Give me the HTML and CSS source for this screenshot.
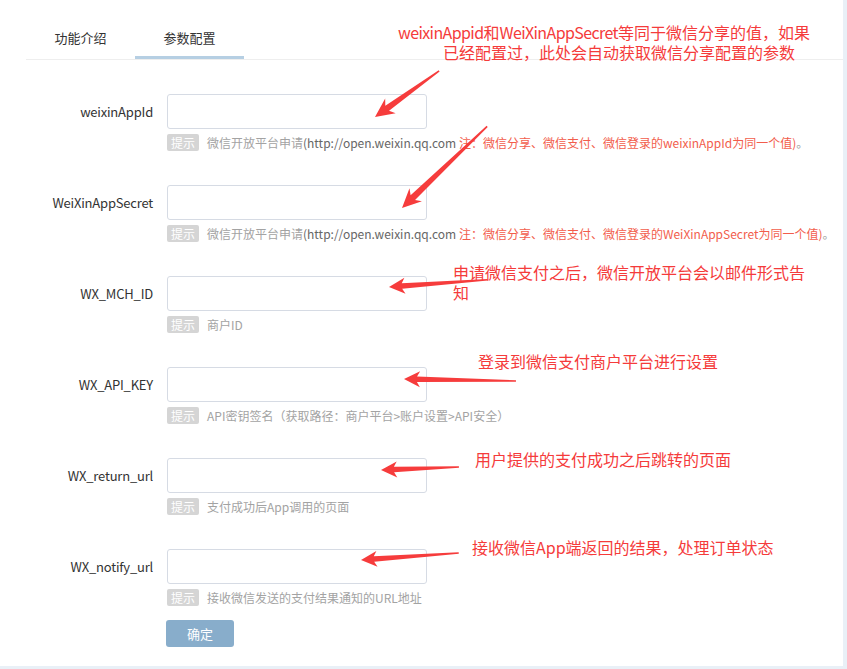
FILE: index.html
```html
<!DOCTYPE html>
<html lang="zh-CN">
<head>
<meta charset="utf-8">
<title>参数配置</title>
<link rel="stylesheet" href="styles.css">
</head>
<body>
<div class="page">
  <div class="tabs">
    <div class="tab">功能介绍</div>
    <div class="tab active">参数配置</div>
  </div>
  <form class="form">
    <div class="row">
      <label class="label">weixinAppId</label>
      <div class="field">
        <input class="input" type="text">
        <div class="hint"><span class="badge">提示</span><span class="hint-text">微信开放平台申请<span class="link">(http://open.weixin.qq.com</span> <span class="warn">注：微信分享、微信支付、微信登录的weixinAppId为同一个值)</span>。</span></div>
      </div>
    </div>
    <div class="row">
      <label class="label">WeiXinAppSecret</label>
      <div class="field">
        <input class="input" type="text">
        <div class="hint"><span class="badge">提示</span><span class="hint-text">微信开放平台申请<span class="link">(http://open.weixin.qq.com</span> <span class="warn">注：微信分享、微信支付、微信登录的WeiXinAppSecret为同一个值)</span>。</span></div>
      </div>
    </div>
    <div class="row">
      <label class="label">WX_MCH_ID</label>
      <div class="field">
        <input class="input" type="text">
        <div class="hint"><span class="badge">提示</span><span class="hint-text">商户ID</span></div>
      </div>
    </div>
    <div class="row">
      <label class="label">WX_API_KEY</label>
      <div class="field">
        <input class="input" type="text">
        <div class="hint"><span class="badge">提示</span><span class="hint-text">API密钥签名（获取路径：商户平台&gt;账户设置&gt;API安全）</span></div>
      </div>
    </div>
    <div class="row">
      <label class="label">WX_return_url</label>
      <div class="field">
        <input class="input" type="text">
        <div class="hint"><span class="badge">提示</span><span class="hint-text">支付成功后App调用的页面</span></div>
      </div>
    </div>
    <div class="row">
      <label class="label">WX_notify_url</label>
      <div class="field">
        <input class="input" type="text">
        <div class="hint"><span class="badge">提示</span><span class="hint-text">接收微信发送的支付结果通知的URL地址</span></div>
      </div>
    </div>
    <div class="actions"><button class="btn" type="button">确定</button></div>
  </form>

  <div class="note note-1a"><span class="tight">weixinAppid</span>和<span class="tight">WeiXinAppSecret</span>等同于微信分享的值，如果</div>
  <div class="note note-1b">已经配置过，此处会自动获取微信分享配置的参数</div>
  <div class="note note-3a">申请微信支付之后，微信开放平台会以邮件形式告</div>
  <div class="note note-3b">知</div>
  <div class="note note-4">登录到微信支付商户平台进行设置</div>
  <div class="note note-5">用户提供的支付成功之后跳转的页面</div>
  <div class="note note-6">接收微信App端返回的结果，处理订单状态</div>

  <svg class="arrows" width="843" height="666" viewBox="0 0 843 666">
    <g fill="#f63c3c">
      <g transform="translate(375 117) rotate(144.3)"><polygon points="-79,-0.8 -15,-3.2 -19,-9 0,0 -19,9 -15,3.2 -79,0.8"/></g>
      <g transform="translate(402 208) rotate(136.2)"><polygon points="-118,-0.8 -15,-3.2 -19,-9 0,0 -19,9 -15,3.2 -118,0.8"/></g>
      <g transform="translate(389 287) rotate(175.8)"><polygon points="-99,-0.7 -13,-2.8 -16,-8 0,0 -16,8 -13,2.8 -99,0.7"/></g>
      <g transform="translate(404 379) rotate(181)"><polygon points="-112,-0.7 -13,-2.8 -16,-8 0,0 -16,8 -13,2.8 -112,0.7"/></g>
      <g transform="translate(381 470) rotate(177.8)"><polygon points="-78,-0.7 -13,-2.8 -16,-8 0,0 -16,8 -13,2.8 -78,0.7"/></g>
      <g transform="translate(361 560) rotate(175.9)"><polygon points="-98,-0.7 -13,-2.8 -16,-8 0,0 -16,8 -13,2.8 -98,0.7"/></g>
    </g>
  </svg>
</div>
</body>
</html>
```
FILE: styles.css
```css
* { box-sizing: border-box; }

html, body {
  margin: 0;
  padding: 0;
  background: #e9f0f7;
  font-family: "Noto Sans CJK SC", "Noto Sans", sans-serif;
  color: #333;
}

.page {
  position: relative;
  width: 843px;
  height: 666px;
  background: #fff;
  overflow: hidden;
}

.tabs {
  display: flex;
  margin-left: 26px;
  padding-top: 20px;
  border-bottom: 1px solid #eeeeee;
}

.tab {
  width: 109px;
  height: 39px;
  line-height: 36px;
  font-size: 13px;
  text-align: center;
  color: #333;
  border-bottom: 3px solid transparent;
}

.tab.active {
  border-bottom-color: #b6cfe3;
}

.form {
  margin: 0;
  padding-top: 34px;
  display: flex;
  flex-direction: column;
  gap: 34px;
}

.row {
  display: grid;
  grid-template-columns: 153px 1fr;
  column-gap: 14px;
}

.label {
  height: 35px;
  line-height: 35px;
  font-size: 13px;
  text-align: right;
  color: #333;
  letter-spacing: -0.2px;
}

.field {
  display: flex;
  flex-direction: column;
  gap: 5px;
}

.input {
  width: 260px;
  height: 35px;
  border: 1px solid #d6dbe4;
  border-radius: 3px;
  background: #fff;
  margin: 0;
  outline: none;
}

.hint {
  display: flex;
  align-items: center;
  gap: 8px;
  height: 17px;
  font-size: 12px;
  white-space: nowrap;
}

.badge {
  display: inline-block;
  width: 32px;
  height: 17px;
  line-height: 17px;
  text-align: center;
  background: #d5d5d5;
  color: #fff;
  border-radius: 2px;
  font-size: 12px;
}

.hint-text {
  color: #a3a3a3;
  line-height: 17px;
}

.hint-text .link { color: #666; }
.hint-text .warn { color: #f25d4c; }

.actions {
  margin-top: -20px;
  padding-left: 166px;
}

.btn {
  width: 68px;
  height: 27px;
  border: none;
  border-radius: 3px;
  background: #88adcb;
  color: #fff;
  font-family: inherit;
  font-size: 13px;
  padding: 0;
}

.note {
  position: absolute;
  font-size: 16px;
  line-height: 18px;
  color: #f53b3b;
  white-space: nowrap;
}

.note .tight { letter-spacing: -0.6px; }

.note-1a { left: 398px; top: 23px; }
.note-1b { left: 443px; top: 43px; }
.note-3a { left: 453px; top: 263px; }
.note-3b { left: 453px; top: 283px; }
.note-4 { left: 478px; top: 352px; }
.note-5 { left: 475px; top: 450px; }
.note-6 { left: 472px; top: 538px; }

.arrows {
  position: absolute;
  left: 0;
  top: 0;
  pointer-events: none;
}
```
